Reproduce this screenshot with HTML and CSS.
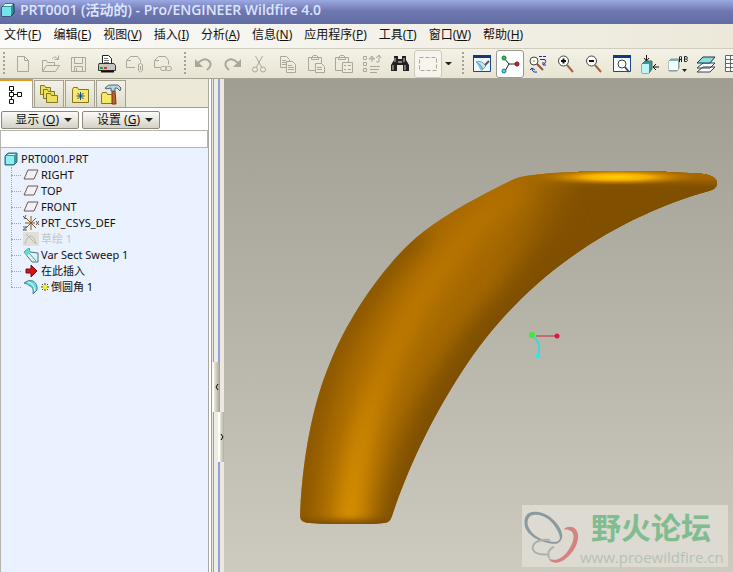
FILE: index.html
```html
<!DOCTYPE html>
<html lang="zh-CN">
<head>
  <meta charset="UTF-8">
  <meta name="viewport" content="width=device-width, initial-scale=1.0">
  <title>PRT0001 (活动的) - Pro/ENGINEER Wildfire 4.0</title>
  <link rel="stylesheet" href="styles.css">
</head>
<body>
  <header class="titlebar">
    <svg width="14" height="14" viewBox="0 0 14 14"><path d="M1 4l3-3h9v9l-3 3H1z" fill="#3a8f9c" stroke="#123f4c"/><path d="M1 4h9v9H1z" fill="#6ee6ea"/><path d="M2 3l2-2h8l-2 2z" fill="#d5ffff"/></svg>
    <h1>PRT0001 (活动的) - Pro/ENGINEER Wildfire 4.0</h1>
  </header>

  <nav class="menu">
    <button>文件(<u>F</u>)</button>
    <button>编辑(<u>E</u>)</button>
    <button>视图(<u>V</u>)</button>
    <button>插入(<u>I</u>)</button>
    <button>分析(<u>A</u>)</button>
    <button>信息(<u>N</u>)</button>
    <button>应用程序(<u>P</u>)</button>
    <button>工具(<u>T</u>)</button>
    <button>窗口(<u>W</u>)</button>
    <button>帮助(<u>H</u>)</button>
  </nav>

  <div class="toolbar">
    <i class="grip"></i>
    <button class="off" aria-label="新建"><svg viewBox="0 0 20 20"><path d="M4.500 2.500h7l4 4v11h-11zM11.500 2.500v4h4"/></svg></button>
    <button class="off" aria-label="打开"><svg viewBox="0 0 20 20"><path d="M1.500 17.500v-11h4l1 2h7v3M1.500 17.500l4-6h13l-4 6zM11 5q3-4 6 0M17.500 1.500v4h-4"/></svg></button>
    <button class="off" aria-label="保存"><svg viewBox="0 0 20 20"><path d="M2.500 3.500h14v14h-14zM5.500 3.500v6h8v-6M5.500 17.500v-5h8v5M7.500 14v3"/></svg></button>
    <button aria-label="打印"><svg viewBox="0 0 20 20"><path d="M5.500 10V1.500h6l3 3V10z" fill="#fff" stroke="#222"/><path d="M7 4.500h4M7 6.500h5M7 8.500h5" stroke="#777"/><path d="M2 9.500h15l1.500 2v5h-17v-5z" fill="#c4c4c0" stroke="#333"/><path d="M4 17.500h13" stroke="#111" stroke-width="2"/><path d="M3 13h3v2H3z" fill="#2a9c3a"/><path d="M7 13h3v2H7z" fill="#d33"/></svg></button>
    <button class="off" aria-label="发送"><svg viewBox="0 0 20 20"><path d="M10 13.500H1.500v-7l4-4h7l3 4v2M2 6.500h4M13.500 10.500q2-2 4 0v6q-2 3-4 0zM15.500 12v4"/></svg></button>
    <button class="off" aria-label="链接"><svg viewBox="0 0 20 20"><path d="M7 13.500H1.500v-7l4-4h7l3 4v4M2 6.500h4"/><rect x="7.500" y="12.500" width="6" height="4" rx="2"/><rect x="12.500" y="12.500" width="6" height="4" rx="2"/></svg></button>
    <i class="grip"></i>
    <button class="off" aria-label="撤消"><svg viewBox="0 0 20 20"><path class="thick" d="M4 9q7-7 12-1 2 4-3 8"/><path class="solid" d="M1 5v8h8z"/></svg></button>
    <button class="off" aria-label="重做"><svg viewBox="0 0 20 20"><path class="thick" d="M16 9Q9 2 4 8q-2 4 3 8"/><path class="solid" d="M19 5v8h-8z"/></svg></button>
    <button class="off" aria-label="剪切"><svg viewBox="0 0 20 20"><path d="M5.500 2l6 11M12.500 2l-6 11"/><circle cx="5" cy="15.500" r="2.500"/><circle cx="13" cy="15.500" r="2.500"/></svg></button>
    <button class="off" aria-label="复制"><svg viewBox="0 0 20 20"><path d="M2.500 2.500h6l3 3v8h-9zM4 6.500h4M4 8.500h5M4 10.500h4"/><path class="paper" d="M8.500 7.500h6l3 3v8h-9z"/><path d="M10 11.500h4M10 13.500h6M10 15.500h6"/></svg></button>
    <button class="off" aria-label="粘贴"><svg viewBox="0 0 20 20"><path d="M2.500 3.500h13v13h-13zM5.500 5.500v-2l2-2h3l2 2v2z"/><path class="paper" d="M9.500 9.500h6l3 3v6h-9z"/><path d="M11 13.500h5M11 15.500h5"/></svg></button>
    <button class="off" aria-label="选择性粘贴"><svg viewBox="0 0 20 20"><path d="M1.500 3.500h13v13h-13zM4.500 5.500v-2l2-2h3l2 2v2z"/><path class="paper" d="M8.500 8.500h10v10h-10z"/><path d="M10 11.500h2M14 11.500h3M10 15.500h2M14 15.500h3"/></svg></button>
    <button class="off" aria-label="再生"><svg viewBox="0 0 20 20"><path d="M1.500 2.500h3v3h-3zM1.500 8.500h3v3h-3zM1.500 14.500h3v3h-3zM8 12.500h10M8 15.500h9M8 18.500h7M7 5h6M10 2v6M7 5q3-5 5 0M14 4l3-3 2 3M17 2v6h-3"/></svg></button>
    <button aria-label="查找"><svg viewBox="0 0 20 20"><path d="M4 2h4v3h4V2h4v4l3 5v6h-6v-6H7v6H1v-6l3-5z" fill="#222"/><path d="M5 4v4M14 4v4M3 11v5M15 11v5" stroke="#ccc"/><path d="M8 8h4" stroke="#888" stroke-width="2"/></svg></button>
    <button class="off framed" aria-label="选择框"><svg viewBox="0 0 20 20"><rect x="1.500" y="3.500" width="17" height="13" stroke-dasharray="4 2"/></svg></button>
    <button class="drop" aria-label="选择方式"></button>
    <i class="grip"></i>
    <button aria-label="重画"><svg viewBox="0 0 20 20"><path d="M1.500 1.500h17v16h-17z" fill="#eef7ff" stroke="#174a91"/><path d="M1 1h18v3H1z" fill="#123a80"/><path d="M4 8l9 5-3 4q-2-1-3-4z" fill="#7fbfdc"/><path d="M4 8q6-2 10 4l-3 3q-2-5-7-7z" fill="#c5e8f5" stroke="#6c9cba"/><path d="M17 7l-4 4" stroke="#66533a" stroke-width="2"/></svg></button>
    <button class="on" aria-label="旋转中心"><svg viewBox="0 0 20 20"><path d="M4 4l5 6h8M9 10l-4 7" stroke="#222" fill="none"/><circle cx="4" cy="4" r="2" fill="#3c3" stroke="#174"/><circle cx="17" cy="10" r="2" fill="#d22" stroke="#711"/><circle cx="4" cy="17" r="2" fill="#4dd" stroke="#277"/></svg></button>
    <button aria-label="定向模式"><svg viewBox="0 0 20 20"><circle cx="6" cy="7" r="4" fill="#fffff0" stroke="#444"/><path d="M9 10l6 6" stroke="#8c5531" stroke-width="2"/><path d="M5.500 7h1" stroke="#222"/><path d="M11 2.500h3M15 2.500h3M12 5.500h5q2 2-1 5M15 8v3h3M9 18q-5 1-5-4M2 16l2-2 3 2" stroke="#1c2f9c" fill="none"/></svg></button>
    <button aria-label="放大"><svg viewBox="0 0 20 20"><path d="M11 11l6 7" stroke="#a0653d" stroke-width="2"/><circle cx="7.500" cy="7" r="5" fill="#fff" stroke="#444"/><path d="M5 7h5M7.500 4.500v5" stroke="#111" stroke-width="2"/></svg></button>
    <button aria-label="缩小"><svg viewBox="0 0 20 20"><path d="M11 11l6 7" stroke="#a0653d" stroke-width="2"/><circle cx="7.500" cy="7" r="5" fill="#fff" stroke="#444"/><path d="M5 7h5" stroke="#111" stroke-width="2"/></svg></button>
    <button aria-label="重新调整"><svg viewBox="0 0 20 20"><path d="M1.500 1.500h17v16h-17z" fill="#f6fbff" stroke="#174a91"/><path d="M1 1h18v3H1z" fill="#123a80"/><circle cx="10" cy="10" r="4" fill="#fff" stroke="#444"/><path d="M13 13l4 5" stroke="#4d4d4d" stroke-width="2"/></svg></button>
    <button aria-label="重定向"><svg viewBox="0 0 20 20"><path d="M2 10l3-3h7v8l-3 4H2z" fill="#399" stroke="#566"/><path d="M2 10h7v9H2z" fill="#bff4f4"/><path d="M6.500 1v5M4 4l2.500 3L9 4M19 13h-5M16 10l-3 3 3 3" stroke="#111" fill="none"/></svg></button>
    <button aria-label="已命名视图"><svg viewBox="0 0 20 20"><path d="M1 7l2-2h8v9l-2 3H1z" fill="#79b5b9" stroke="#899"/><path d="M1 7h9v9H1z" fill="#f5ffff"/><path d="M11.500 8V3l1-1 1 1v5M11.500 5.500h2M16.500 2.500v5h2l1-1-1-1.500 1-1-1-1.500zM17 5h1" stroke="#222" fill="none"/><path d="M14 15h5l-2.500 3z" fill="#222"/></svg></button>
    <button aria-label="层"><svg viewBox="0 0 20 20"><path d="M1 18l6-5h12l-5 5zM1 14l6-5h12l-5 5z" fill="#fff" stroke="#345"/><path d="M1 9l6-6h12l-5 6z" fill="#86dfe0" stroke="#234"/></svg></button>
    <button aria-label="视图管理器"><svg viewBox="0 0 20 20"><path d="M1.500 1.500h18v16h-18zM1.500 5.500h18M1.500 9.500h18M1.500 13.500h18M6.500 1.500v16M12.500 1.500v16" fill="#fff" stroke="#666"/></svg></button>
  </div>

  <main class="main">
    <aside class="side">
      <div class="tabs">
        <button class="tab active" aria-label="模型树"><svg viewBox="0 0 22 22"><path d="M8.500 5v13M9 10.500h7" stroke="#111"/><path d="M6.500 2.500h4v4h-4zM6.500 8.500h4v4h-4zM6.500 15.500h4v4h-4zM14.500 8.500h4v4h-4z" fill="#fff" stroke="#111"/></svg></button>
        <button class="tab" aria-label="文件夹浏览器"><svg viewBox="0 0 22 22"><g fill="#ecdf5c" stroke="#82752a"><path d="M2.500 2.500h4l1 2h5v7h-10z"/><path d="M5.500 6.500h4l1 2h6v7h-11z"/><path d="M8.500 10.500h4l1 2h6v7h-11z"/></g></svg></button>
        <button class="tab" aria-label="收藏夹"><svg viewBox="0 0 22 22"><path d="M3.500 6.500l1-2h4l1 2h10v13h-16z" fill="#f5e86b" stroke="#82752a"/><path d="M11.500 9v8M7.500 13h8M8.500 10l6 6M14.500 10l-6 6" stroke="#1d4b7c"/></svg></button>
        <button class="tab" aria-label="连接"><svg viewBox="0 0 22 22"><path d="M1.500 11.500l1-2h4l1 2h6v9h-12z" fill="#f5e86b" stroke="#82752a"/><path d="M12 8h3l1 13h-4z" fill="#c0632c" stroke="#713515"/><path d="M5 5q3-4 8-3h5l3 3-1 3-3-3h-2v3h-4V5l-5 1z" fill="#bcd5e4" stroke="#4c6678"/></svg></button>
      </div>
      <div class="options">
        <button><span>显示 (<u>O</u>)</span><i></i></button>
        <button><span>设置 (<u>G</u>)</span><i></i></button>
      </div>
      <div class="column-head"></div>
      <div class="tree">
        <p class="root"><svg viewBox="0 0 16 16"><path d="M1 5l3-3h9v9l-3 3H1z" fill="#3e9aa6" stroke="#3a7180"/><path d="M2 5h8v8H2z" fill="#8ff0f2"/><path d="M3 4l2-1h7l-2 1z" fill="#d8ffff"/></svg>PRT0001.PRT</p>
        <ul>
          <li><svg viewBox="0 0 16 16"><path class="plane" d="M5 3h10l-4 9H1z"/></svg>RIGHT</li>
          <li><svg viewBox="0 0 16 16"><path class="plane" d="M5 3h10l-4 9H1z"/></svg>TOP</li>
          <li><svg viewBox="0 0 16 16"><path class="plane" d="M5 3h10l-4 9H1z"/></svg>FRONT</li>
          <li><svg viewBox="0 0 16 16"><path d="M8 1v14M2 8h10M3 3l10 10M13 3L3 13" stroke="#87551f"/><path d="M0 1l3 3M3 0L1 4M13 6l3 4M16 6l-3 4M0 12h4l-4 3h4" stroke="#555" fill="none"/></svg>PRT_CSYS_DEF</li>
          <li class="hidden"><svg viewBox="0 0 16 16"><path d="M0 1h16v14H0z" fill="#e0e0d8"/><path d="M2 13q2-8 6-8 3 0 5 8M3 3l10 10" stroke="#b5b8b2" fill="none"/></svg>草绘 1</li>
          <li><svg viewBox="0 0 16 16"><path d="M1 5l5-4 1 4 8 1v9H9z" fill="#d9f6f6" stroke="#4c7478"/><path d="M1 5l5-4 1 4-3 4z" fill="#65d8da"/><path d="M6 6l7 8" stroke="#6a8e90"/></svg>Var Sect Sweep 1</li>
          <li><svg viewBox="0 0 16 16"><path d="M3 6h5V2l6 6-6 6v-4H3z" fill="#d01616" stroke="#7e0c0c"/></svg>在此插入</li>
          <li><svg viewBox="0 0 16 16"><path d="M1 4q5-4 9-2 5 3 4 9l-4 4q1-7-3-8-2-2-6-3z" fill="#6bdde2" stroke="#3f8790"/><path d="M5 3q6 1 7 9" stroke="#d8ffff" fill="none"/></svg><svg class="star" viewBox="0 0 8 8"><path d="M4 0v8M0 4h8M1 1l6 6M7 1L1 7" stroke="#554d00"/><path d="M2 2h4v4H2z" fill="#f4ec1c"/></svg>倒圆角 1</li>
        </ul>
      </div>
    </aside>

    <div class="splitter">
      <button class="handle collapse" aria-label="收起"><svg viewBox="0 0 4 6"><path d="M3 0L1 3l2 3" stroke="#000" stroke-width="1" fill="none"/></svg></button>
      <button class="handle expand" aria-label="展开"><svg viewBox="0 0 4 6"><path d="M1 0l2 3-2 3" stroke="#000" stroke-width="1" fill="none"/></svg></button>
    </div>

    <section class="view">
      <svg class="model" viewBox="224 79 509 493">
        <defs>
          <path id="horn" d="M300 516C302 462 312 405 330 363C348 317 387 260 423 232C450 211 482 195 512 180Q520 176 533 175L553 173L578 172L580 171H665L667 172L690 173C706 173 717 176 717 183Q717 189 709 191C665 203 613 226 567 260C527 289 490 328 463 370C436 411 410 462 392 516Q390 523 384 523L373 524H325L310 523Q300 523 300 516z"/>
          <clipPath id="horn-clip"><use href="#horn"/></clipPath>
          <linearGradient id="ridge" gradientUnits="userSpaceOnUse" x1="350" y1="520" x2="500" y2="180">
            <stop offset="0" stop-color="#e09700"/>
            <stop offset=".4" stop-color="#c27e00"/>
            <stop offset="1" stop-color="#b37000"/>
          </linearGradient>
          <radialGradient id="shine">
            <stop offset="0" stop-color="#ffd400"/>
            <stop offset=".4" stop-color="#f5ae00"/>
            <stop offset="1" stop-color="#b87400" stop-opacity="0"/>
          </radialGradient>
          <filter id="soft" filterUnits="userSpaceOnUse" x="224" y="79" width="609" height="593"><feGaussianBlur stdDeviation="11"/></filter>
          <filter id="wide" filterUnits="userSpaceOnUse" x="224" y="79" width="609" height="593"><feGaussianBlur stdDeviation="20"/></filter>
          <filter id="edge" filterUnits="userSpaceOnUse" x="224" y="79" width="609" height="593"><feGaussianBlur stdDeviation="3"/></filter>
        </defs>
        <g clip-path="url(#horn-clip)" fill="none">
          <path d="M290 160h440v370H290z" fill="#a66900"/>
          <path d="M397 545C410 462 436 411 463 370C490 328 527 289 567 260C613 226 665 203 740 180" stroke="#7d4f00" stroke-width="44" filter="url(#soft)"/>
          <path d="M570 150h190v50L570 300l-60-10z" fill="#805000" filter="url(#wide)"/>
          <path d="M297 560C300 462 312 405 330 363C348 317 387 260 423 232" stroke="#805000" stroke-width="18" filter="url(#soft)"/>
          <path d="M346 560C350 490 359 440 375 395C390 350 420 292 455 250Q480 215 520 185" stroke="url(#ridge)" stroke-width="26" filter="url(#soft)"/>
          <path d="M525 168H725V182H535z" fill="#a76900" filter="url(#edge)"/>
          <ellipse cx="617" cy="177" rx="80" ry="8" fill="url(#shine)"/>
          <path d="M295 520h102v10H295z" fill="#7a4c00" filter="url(#edge)"/>
        </g>
        <g class="spin">
          <path d="M536 336h20" stroke="#cc2244"/>
          <path d="M534 337q8 8 4 18" stroke="#3cd8dc" stroke-width="2" fill="none"/>
          <circle cx="532" cy="335" r="3" fill="#3fe83a"/>
          <circle cx="557" cy="336" r="2.500" fill="#dd1840"/>
          <circle cx="538" cy="356" r="2.500" fill="#3ee2e2"/>
        </g>
      </svg>
      <div class="watermark">
        <svg viewBox="0 0 60 60"><path fill-rule="evenodd" fill="#8a9ba0" d="M3 20C1 9 6 4 15 5C27 6 38 16 41 26C43 32 40 36 36 38C25 39 6 32 3 20zM6 19C10 32 26 37 36 36C41 34 39 29 37 25C32 15 24 8 14 8C7 8 5 13 6 19z"/><path fill-rule="evenodd" fill="#d38482" d="M43 23C50 18 57 21 58 29C59 39 50 53 39 57C33 59 28 56 28 53C34 57 42 53 47 46C54 37 55 28 51 25Q48 23 43 23z"/><path d="M29 34C17 33 11 37 11 43Q13 50 26 49M28 53q-3-8 5-12" stroke="#a8b1ae" stroke-width="2" fill="none"/></svg>
        <div>
          <strong>野火论坛</strong>
          <span>www.proewildfire.cn</span>
        </div>
      </div>
    </section>
  </main>
</body>
</html>
```
FILE: styles.css
```css
*{
  margin: 0;
  padding: 0;
  box-sizing: border-box;
}
body{
  display: flex;
  flex-direction: column;
  height: 100vh;
  overflow: hidden;
  font: 11px/16px "Noto Sans", "Noto Sans CJK SC", sans-serif;
  color: #111;
  background-color: #ece9d8;
}
button{
  flex: none;
  border: 0;
  background: none;
  font: inherit;
  color: inherit;
}
ul{
  list-style: none;
}
.titlebar{
  display: flex;
  align-items: center;
  gap: 5px;
  flex: none;
  height: 24px;
  padding: 0 1px 4px;
  background-image: linear-gradient(#9ba9e2, #7078b2 45%, #5f6ca2);
}
.titlebar h1{
  font: 600 14px/20px "Open Sans", "Noto Sans CJK SC", sans-serif;
  color: #dce4ff;
  white-space: nowrap;
}
.menu{
  display: flex;
  gap: 12px;
  flex: none;
  height: 24px;
  padding: 0 4px;
  font-size: 12px;
  background-image: linear-gradient(to right, #fbfbfa, #ece9da);
}
.menu button{
  height: 22px;
  white-space: nowrap;
}

/* 工具栏 */
.toolbar{
  display: flex;
  align-items: center;
  flex: none;
  height: 31px;
  overflow: hidden;
  border-top: 1px solid #d0cdbc;
  border-bottom: 1px solid #a5a395;
  background-image: linear-gradient(#f4f2e7, #e7e4d2);
}
.toolbar button{
  width: 28px;
  height: 28px;
  padding: 4px;
}
.toolbar svg{
  display: block;
  width: 20px;
  height: 20px;
  fill: none;
}
.toolbar .off svg{
  stroke: #aaa799;
}
.toolbar .off .thick{
  stroke-width: 2;
}
.toolbar .off .solid{
  fill: #aaa799;
  stroke: none;
}
.toolbar .off .paper{
  fill: #efecdf;
}
.toolbar .on,
.toolbar .framed{
  padding: 3px;
  border: 1px solid #9a9a8e;
  border-radius: 3px;
  background-color: #fff;
}
.toolbar .framed{
  border-color: #cbc9bd;
  background-color: #f6f4ec;
}
.toolbar .drop{
  width: 13px;
  padding: 0 3px;
}
.drop::before,
.options i{
  content: '';
  display: block;
  border: 3px solid transparent;
  border-top-color: #222;
  border-bottom: 0;
}
.grip{
  flex: none;
  width: 2px;
  height: 24px;
  margin: 0 4px 0 7px;
  background-image: repeating-linear-gradient(#a5a294 0 2px, transparent 2px 4px);
}
.grip:first-child{
  margin-left: 3px;
}

.main{
  display: flex;
  flex: 1;
  min-height: 0;
}

/* 左侧模型树 */
.side{
  display: flex;
  flex-direction: column;
  flex: none;
  width: 208px;
}
.tabs{
  display: flex;
  align-items: flex-end;
  gap: 1px;
  height: 29px;
  border-bottom: 1px solid #a3a08f;
}
.tab{
  width: 30px;
  height: 27px;
  padding: 2px 3px;
  border: 1px solid #a3a08f;
  border-bottom: 0;
  background-image: linear-gradient(#f4f2e7, #dfdccb);
}
.tab.active{
  width: 33px;
  height: 29px;
  margin-bottom: -1px;
  border-top: 2px solid #e59a18;
  border-left: 0;
  background: #fff;
}
.tab svg{
  display: block;
  width: 22px;
  height: 22px;
  fill: none;
}
.options{
  display: flex;
  gap: 3px;
  padding: 3px 1px 1px;
  background-color: #fff;
}
.options button{
  display: flex;
  align-items: center;
  justify-content: flex-end;
  gap: 5px;
  width: 78px;
  height: 18px;
  padding-right: 6px;
  border: 1px solid #8c887c;
  border-radius: 2px;
  font-size: 12px;
  line-height: 16px;
  background-image: linear-gradient(#fbfaf7, #d5d1c5);
}
.options i{
  border-width: 4px 4px 0;
}
.column-head{
  height: 18px;
  border: 1px solid #b5b5ae;
  background-color: #fff;
}
.tree{
  flex: 1;
  padding: 3px 0 0 3px;
  border-left: 1px solid #b5b5ae;
  background-color: #e9f2fe;
  white-space: nowrap;
}
.tree svg{
  flex: none;
  width: 16px;
  height: 16px;
  fill: none;
}
.root{
  display: flex;
  align-items: center;
  gap: 1px;
}
.tree ul{
  position: relative;
  margin-left: 7px;
}
.tree ul::before{
  content: '';
  position: absolute;
  top: 0;
  bottom: 8px;
  border-left: 1px dotted #a0a4ac;
}
.tree li{
  display: flex;
  align-items: center;
  gap: 2px;
  height: 16px;
}
.tree li::before{
  content: '';
  width: 10px;
  border-top: 1px dotted #a0a4ac;
}
.tree li .star{
  width: 8px;
  height: 8px;
}
.tree .hidden{
  color: #c0c5cb;
}
.plane{
  stroke: #85543a;
}

/* 分隔条 */
.splitter{
  position: relative;
  flex: none;
  width: 16px;
  background-image: linear-gradient(to right, #a8a89e 0 1px, #fff 1px 3px, #9c9c92 3px 4px, #eeece4 4px 5px, #8b9cb8 5px 6px, #eeece4 6px 10px, #8fa3d4 10px 12px, #efe7e2 12px 16px);
}
.handle{
  position: absolute;
  display: flex;
  align-items: center;
  justify-content: center;
  height: 50px;
  border-left: 2px solid #fffef4;
  background-image: linear-gradient(to right, #e9e7dc, #aeb09f);
}
.handle svg{
  flex: none;
  width: 4px;
  height: 6px;
}
.collapse{
  top: 283px;
  left: 4px;
  width: 7px;
}
.expand{
  top: 333px;
  left: 10px;
  width: 6px;
}

/* 图形窗口 */
.view{
  position: relative;
  flex: 1;
  min-width: 0;
  background-image: linear-gradient(#a09e92, #cdcbbf);
}
.model{
  display: block;
  width: 100%;
  height: 100%;
}
.watermark{
  position: absolute;
  right: 5px;
  bottom: 5px;
  display: flex;
  align-items: center;
  width: 206px;
  height: 62px;
  background-color: #dddad1;
}
.watermark svg{
  flex: none;
  width: 58px;
  height: 60px;
}
.watermark div{
  display: flex;
  flex-direction: column;
}
.watermark strong{
  padding-left: 11px;
  font: 700 30px/42px "Noto Sans CJK SC", sans-serif;
  color: #7fbd91;
}
.watermark span{
  font: 15px/20px "Open Sans", sans-serif;
  color: #b4c2b9;
}
```
